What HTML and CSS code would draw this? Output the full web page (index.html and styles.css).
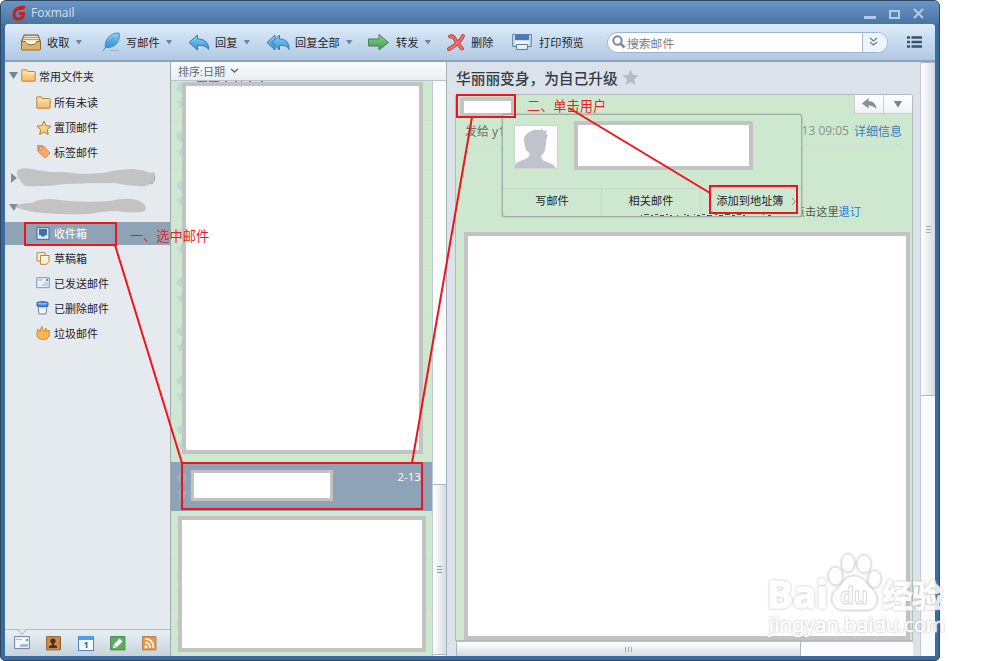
FILE: index.html
```html
<!DOCTYPE html>
<html lang="zh-CN">
<head>
    <meta charset="UTF-8">
    <meta name="viewport" content="width=device-width, initial-scale=1.0">
    <title>Foxmail</title>
    <link rel="stylesheet" href="styles.css">
</head>
<body>

    <svg class="defs" width="0" height="0">
        <defs>
            <linearGradient id="blue" x1="0" y1="0" x2="0" y2="1"><stop offset="0" stop-color="#8fd3fa"/><stop offset="1" stop-color="#2f90d4"/></linearGradient>
            <linearGradient id="green" x1="0" y1="0" x2="0" y2="1"><stop offset="0" stop-color="#86cf8b"/><stop offset="1" stop-color="#3d9e50"/></linearGradient>
            <linearGradient id="gold" x1="0" y1="0" x2="0" y2="1"><stop offset="0" stop-color="#ffe2a6"/><stop offset="1" stop-color="#f5bb68"/></linearGradient>
            <symbol id="star" viewBox="0 0 16 16"><path d="M8 .6l2.2 4.9 5.3.6-4 3.6 1.1 5.3L8 12.300 3.400 15l1.100-5.300-4-3.600 5.300-.6z"/></symbol>
            <symbol id="folder" viewBox="0 0 15 13"><path d="M.8 11.500V1.500q0-.7.7-.7h4l1.200 1.700h6.800q.7 0 .7.700v8.300q0 .7-.7.700h-12q-.7 0-.7-.7z" fill="url(#gold)" stroke="#bb7f35"/><path d="M1.500 4h12" stroke="#fff0c8"/></symbol>
        </defs>
    </svg>

    <div class="window">
        <div class="titlebar">
            <svg class="logo" width="14" height="16" viewBox="0 0 14 16"><path d="M12 2.500C6 1.500 2 5 2 10c0 3 2 4 4.500 4C9.500 14 11.500 12 11.500 8.500H7" fill="none" stroke="#cf1f12" stroke-width="3"/><path d="M3 6l4-4.500L14 1l-2 3.500z" fill="#cf1f12"/></svg>
            <span>Foxmail</span>
            <svg class="controls" width="62" height="14" viewBox="0 0 62 14" fill="none" stroke="#b4cbe4">
                <path d="M0 11.500h12" stroke-width="3"/><path d="M26 5h9v7h-9z" stroke-width="2"/><path d="M50 3l9 9M59 3l-9 9" stroke-width="2"/>
            </svg>
        </div>

        <div class="toolbar">
            <div class="tool receive">
                <svg width="22" height="20" viewBox="0 0 22 20"><path d="M4 3h14l2.500 6.500H1.500z" fill="#c49c66" stroke="#826337"/><path d="M4.500 4.500h13M3.500 6.500h15M3 8.500h16" stroke="#f3e4cf"/><path d="M1.500 9.500h4q1 3.500 5.500 3.500t5.500-3.500h4V17q0 1-1 1h-17q-1 0-1-1z" fill="#dbb660" stroke="#8b6b32"/><path d="M5.500 9h11q-1 3-5.500 3t-5.500-3z" fill="#fff"/></svg>
                <span>收取</span><i class="arrow"></i>
            </div>
            <div class="tool write">
                <svg width="19" height="20" viewBox="0 0 19 20"><path d="M8 18.500h9" stroke="#9fb3c7"/><path d="M3.500 15.500C2 8 8 1 17 1c1.500 8-3 13.500-10 14.500z" fill="url(#blue)" stroke="#3a93d0"/><path d="M1 19Q5 11 12 5.500" fill="none" stroke="#4a93c4"/></svg>
                <span>写邮件</span><i class="arrow"></i>
            </div>
            <div class="tool reply">
                <svg width="22" height="19" viewBox="0 0 22 19"><path d="M1 9.500L9.500 2v4C17 6 21 10 20.500 16.500 18 12.500 14 12.500 9.500 12.500V17z" fill="url(#blue)" stroke="#327eb6"/></svg>
                <span>回复</span><i class="arrow"></i>
            </div>
            <div class="tool reply-all">
                <svg width="24" height="19" viewBox="0 0 24 19"><path d="M1 9.500L9 2v4l-3 3.500 3 4V17z" fill="url(#blue)" stroke="#327eb6"/><path d="M6 9.500L13.500 2v4C20 6 23.500 10 23 16.500 21 12.500 18 12.500 13.500 12.500V17z" fill="url(#blue)" stroke="#327eb6"/></svg>
                <span>回复全部</span><i class="arrow"></i>
            </div>
            <div class="tool forward">
                <svg width="23" height="19" viewBox="0 0 23 19"><path d="M1.500 6H12V1.500l9.500 8L12 17v-4H1.500z" fill="url(#green)" stroke="#468151"/></svg>
                <span>转发</span><i class="arrow"></i>
            </div>
            <div class="tool delete">
                <svg width="19" height="19" viewBox="0 0 19 19" fill="none"><path d="M3 3.500q3-1 5 3 3 5 7 9M16 3Q13 10 2 16" stroke="#b53a38" stroke-width="3.800" stroke-linecap="round"/><path d="M3 3.500q3-1 5 3 3 5 7 9M16 3Q13 10 2 16" stroke="#ee7269" stroke-width="2.200" stroke-linecap="round"/></svg>
                <span>删除</span>
            </div>
            <div class="tool print">
                <svg width="20" height="18" viewBox="0 0 20 18"><path d="M.7 1.500h18.600v12H.7z" fill="#cddcea" stroke="#627fa2"/><path d="M3 2h14v5H3z" fill="#4678cb"/><path d="M3 8.500h14v2H3z" fill="#fff"/><path d="M4.500 11.500h11v5h-11z" fill="#e7f3fa" stroke="#627fa2"/></svg>
                <span>打印预览</span>
            </div>
            <div class="search">
                <svg width="14" height="14" viewBox="0 0 14 14" fill="none" stroke="#7489a0" stroke-width="2"><circle cx="5.500" cy="5.500" r="4.200"/><path d="M8.500 8.500l4 4" stroke-width="2.500"/></svg>
                <span>搜索邮件</span>
                <div class="search-more"><svg width="9" height="10" viewBox="0 0 9 10" fill="none" stroke="#6d7f90" stroke-width="1.300"><path d="M1 1l3.500 3L8 1M1 5l3.500 3L8 5"/></svg></div>
            </div>
            <svg class="menu" width="15" height="12" viewBox="0 0 15 12" stroke="#38546f" stroke-width="2.600"><path d="M0 1.500h3M4.500 1.500H15M0 6h3M4.500 6H15M0 10.500h3M4.500 10.500H15"/></svg>
        </div>

        <div class="main">
            <div class="sidebar">
                <div class="folders">
                    <div class="folder root"><i class="arrow"></i><svg width="15" height="13"><use href="#folder"/></svg>常用文件夹</div>
                    <div class="folder"><svg width="15" height="13"><use href="#folder"/></svg>所有未读</div>
                    <div class="folder"><svg width="15" height="15" viewBox="-.5 -.5 17 17" fill="#f5d27e" stroke="#a97c32"><use href="#star"/></svg>置顶邮件</div>
                    <div class="folder"><svg width="15" height="15" viewBox="0 0 15 15"><path d="M1.500 1.500l6 .5 6.500 7-5 5-7-6.500z" fill="#f8aa6b" stroke="#dc8850"/><circle cx="4.500" cy="4.500" r="1.500" fill="#fff" stroke="#b5673b"/></svg>标签邮件</div>
                    <div class="account">
                        <svg width="165" height="29" viewBox="5 165 165 29"><path d="M11 174l6 5-6 5z" fill="#7c8ea0"/><path d="M151 185q4-1 3.500-9" fill="none" stroke="#4c6ea0"/><path d="M17 172q4-4 15-2 19 4 33 3 15 3 38 1 16-4 30-4 12 1 17 4 5-2 5 1l-1 9q-5 1-8 3-15 1-31-3-24 0-50 1-22 3-40 2-9-8-8-15z" fill="#c3c3c3"/></svg>
                    </div>
                    <div class="account">
                        <svg width="165" height="28" viewBox="5 194 165 28"><path d="M9 205h9l-4 7z" fill="#7c8ea0"/><path d="M15 208q3-4 17-4 10-6 28-3 22 3 50 1 16-4 27-1 11 4 8 11-9 3-28 0-12 0-28 3-26 1-46-1-15-1-28-6z" fill="#c3c3c3"/></svg>
                    </div>
                    <div class="folder selected"><svg width="15" height="13" viewBox="0 0 15 13"><path d="M1 .7h12v11.600H1z" fill="#dfebf7" stroke="#41648c"/><path d="M3 2h8v6H9.500l-1 1.500h-3L4.500 8H3z" fill="#3d72a9"/></svg>收件箱</div>
                    <div class="folder"><svg width="15" height="13" viewBox="0 0 15 13" fill="#fff0d5" stroke="#b98343"><path d="M1 .7h8V9H1z"/><path d="M4.500 3.500h8.500v6l-2.500 2.800h-6z"/></svg>草稿箱</div>
                    <div class="folder"><svg width="15" height="12" viewBox="0 0 15 12"><path d="M.7.7h12.600v10H.7z" fill="#e7eef5" stroke="#7c93ae"/><path d="M2 3h4M6 8h6M8 6h4" stroke="#9bb1ca"/><path d="M10 2h2v2h-2z" fill="#5e91b8"/></svg>已发送邮件</div>
                    <div class="folder"><svg width="15" height="14" viewBox="0 0 15 14"><path d="M2 4h9l-1 9H3z" fill="#f1f3f6" stroke="#74879e"/><path d="M1 1.500q5.500-2 11 0V5q-5.500 2-11 0z" fill="#4b8ae0" stroke="#2b62ac"/><path d="M2 2.500q4.500 1 9 0" stroke="#a8d0ff" fill="none"/></svg>已删除邮件</div>
                    <div class="folder"><svg width="15" height="14" viewBox="0 0 15 14"><path d="M1 7q0-2 1-4l2 3Q4 3 6 .5q0 3 2 5L10 2l1 4 2-2q2 9.500-5.500 9.500T1 7z" fill="#f8b757" stroke="#d28629"/></svg>垃圾邮件</div>
                </div>
                <div class="modules">
                    <svg class="notch" width="12" height="7" viewBox="0 0 12 7"><path d="M0 .5h1.500l4.500 5 4.500-5H12" fill="#e5eaee" stroke="#a5afb8"/></svg>
                    <svg width="16" height="14" viewBox="0 0 16 14"><path d="M.6.600h14.800v12H.6z" fill="#f0f5fa" stroke="#6d83a2"/><path d="M2 3.500h6" stroke="#abc"/><path d="M7 8h7v3H5z" fill="#a4bfd1"/><path d="M12 3h2v2h-2z" fill="#4eaa76"/></svg>
                    <svg width="16" height="15" viewBox="0 0 16 15"><path d="M.6.600h13.800v13.300H.6z" fill="#c98b50" stroke="#9c6330"/><path d="M14.500 2v11" stroke="#8a562c"/><circle cx="7" cy="5" r="2.600" fill="#4b3020"/><path d="M6 7h2v2l3 1v2H3v-2l3-1z" fill="#4b3020"/></svg>
                    <div class="calendar">1</div>
                    <svg width="16" height="15" viewBox="0 0 16 15"><path d="M.6.600h14.300v13.300H.6z" fill="#5fac61" stroke="#438a4a"/><path d="M5 10l6-6" stroke="#fff" stroke-width="4"/><path d="M3 12v-3l3 3z" fill="#fff"/></svg>
                    <svg width="15" height="15" viewBox="0 0 15 15" fill="none"><path d="M.6.600h13.300v13.300H.6z" fill="#e49b50" stroke="#bd783a"/><circle cx="4" cy="11" r="1.400" fill="#fff"/><path d="M3 6.500q5 0 5 5.500M3 3q8.500 0 8.500 9" stroke="#fff" stroke-width="1.600"/></svg>
                </div>
            </div>

            <div class="mail-list">
                <div class="sort">排序:日期<svg width="9" height="6" viewBox="0 0 9 6" fill="none" stroke="#626a72" stroke-width="1.500"><path d="M1 1l3.500 3L8 1"/></svg></div>
                <div class="list-body">
                    <div class="rows">
                        <div class="row"><i></i><svg><use href="#star"/></svg></div>
                        <div class="row"><i></i><svg><use href="#star"/></svg></div>
                        <div class="row"><i></i><svg><use href="#star"/></svg></div>
                        <div class="row"><i></i><svg><use href="#star"/></svg></div>
                        <div class="row"><i></i><svg><use href="#star"/></svg></div>
                        <div class="row"><i></i><svg><use href="#star"/></svg></div>
                        <div class="row"><i></i><svg><use href="#star"/></svg></div>
                        <div class="row"><i></i><svg><use href="#star"/></svg></div>
                        <div class="row current"><i></i><svg><use href="#star"/></svg><div class="blank"></div><span>2-13</span></div>
                        <div class="row"><i></i><svg><use href="#star"/></svg></div>
                        <div class="row"><i></i><svg><use href="#star"/></svg></div>
                        <div class="row"><i></i><svg><use href="#star"/></svg></div>
                        <svg class="cut-line" width="70" height="2" viewBox="0 0 70 2" stroke="#59635b" stroke-width="1.500"><path d="M0 1h10M12 1h10M28 1h2M38 1h2M44 1h1M52 1h2M64 1h2"/></svg>
                        <div class="blank cover-top"></div>
                        <div class="blank cover-bottom"></div>
                    </div>
                    <div class="scrollbar"><div class="thumb"><i class="grip"></i></div></div>
                </div>
            </div>

            <div class="reader">
                <h1>华丽丽变身，为自己升级<svg width="17" height="17"><use href="#star"/></svg></h1>
                <div class="mail">
                    <div class="mail-head">
                        <div class="blank sender"></div>
                        <div class="actions">
                            <div><svg width="15" height="12" viewBox="0 0 15 12"><path d="M0 5.500L6.500 0v3q7 0 8 8-3-3.500-8-3.500v3z" fill="#8291a0"/></svg></div>
                            <div><i class="arrow"></i></div>
                        </div>
                    </div>
                    <div class="mail-to"><span>发给 y1</span><span class="time">2-13 09:05</span><a>详细信息</a></div>
                    <div class="unsubscribe">您可点击这里<a>退订</a></div>
                    <div class="blank content"></div>

                    <div class="card">
                        <div class="card-info">
                            <svg class="avatar" width="44" height="44" viewBox="0 0 44 44"><path d="M.5.500h43v43H.5z" fill="#fff" stroke="#cbd5cf"/><path d="M1 43v-3q1-3 8-5 6-2 7-6l-4-4-2-8q-1-6 4-9 5-4 11-3l4-1v2l4-1-1 4 2 1q-2 3-2 8 0 9-5 13 0 4 6 6 7 2 9 6z" fill="#bec3cc"/></svg>
                            <div class="blank"></div>
                        </div>
                        <div class="card-menu"><span>写邮件</span><span>相关邮件</span><span>添加到地址簿</span></div>
                        <svg class="more" width="6" height="9" viewBox="0 0 6 9" fill="none" stroke="#7a8a7e"><path d="M1 1l3.500 3.500L1 8"/></svg>
                        <svg class="cut-line" width="130" height="3" viewBox="0 0 130 3" stroke="#49534c"><path d="M0 1.500h1M3 .5h5M10 1.500h2M14 .5h3M19 1.500h4M25 .5h2M29 1.500h2M36 1.500h1M43 .5h2M46 1.500h2M53 .5h1M56 1.500h3M61 .5h3M66 1.500h5M74 .5h2M78 1.500h4M84 .5h5M91 1.500h3M96 .5h4M102 1.500h2M122 .5h1M127 1.500h3"/></svg>
                    </div>
                </div>
                <div class="hscroll"><div class="hthumb"><i class="grip"></i></div></div>
            </div>

            <div class="scrollbar page-scroll"><div class="thumb"><i class="grip"></i></div></div>
        </div>
    </div>

    <!-- step marks drawn over the window -->
    <svg class="marks" width="1000" height="661" viewBox="0 0 1000 661" fill="none" stroke="#f0121c" stroke-width="2">
        <path d="M25 223h91v22H25zM182 463h240v46H182zM457 95h58v22h-58zM710 186h87v27h-87z"/>
        <path d="M115 245L182 463M472 117L412 463M569 108L710 193"/>
    </svg>
    <div class="step step-one">一、选中邮件</div>
    <div class="step step-two">二、单击用户</div>

    <svg class="watermark" width="190" height="95" viewBox="760 548 190 95">
        <g class="wm-shape">
            <ellipse cx="835.500" cy="576" rx="7" ry="9"/><ellipse cx="848" cy="563" rx="6.500" ry="9"/><ellipse cx="864" cy="564" rx="7" ry="9"/><ellipse cx="874.500" cy="579" rx="6.500" ry="8.500"/>
            <path d="M854 576c-10 0-10 7-16 12-11 8-5 22 5 22h23c12 0 15-13 5-22-6-5-7-12-17-12z"/>
        </g>
        <text x="767" y="608" class="wm-big" textLength="61" lengthAdjust="spacingAndGlyphs">Bai</text>
        <text x="840" y="604" class="wm-du" textLength="28" lengthAdjust="spacingAndGlyphs">du</text>
        <text x="882" y="607" class="wm-cn" textLength="61">经验</text>
        <text x="769" y="632" class="wm-url" textLength="176" lengthAdjust="spacingAndGlyphs">jingyan.baidu.com</text>
    </svg>

</body>
</html>
```
FILE: styles.css
```css
* {
    box-sizing: border-box;
}

body {
    margin: 0;
    width: 1000px;
    height: 661px;
    overflow: hidden;
    position: relative;
    background: #fff;
    font-family: "Open Sans", "Noto Sans CJK SC", sans-serif;
    font-size: 11.2px;
    color: #1d242b;
}

svg {
    display: block;
    flex: none;
}

.defs {
    position: absolute;
}

.window {
    width: 940px;
    height: 661px;
    display: flex;
    flex-direction: column;
    padding: 0 4px 4px;
    background: #3b6a9e;
    border: 1px solid #2d4866;
    border-radius: 6px 6px 5px 5px;
}

.titlebar {
    height: 23px;
    margin: 0 -4px;
    padding: 0 13px 0 11px;
    display: flex;
    align-items: center;
    background: linear-gradient(#6c95c5, #4874a4);
    border-radius: 5px 5px 0 0;
    color: #d3e2f3;
    font-size: 12px;
}

.titlebar span {
    margin-left: 5px;
}

.controls {
    margin-left: auto;
}

.toolbar {
    height: 38px;
    flex: none;
    display: flex;
    align-items: center;
    padding-left: 15px;
    background: linear-gradient(#dcebf9, #b0c9e4);
    border-bottom: 2px solid #8fa2b7;
    border-radius: 3px 3px 0 0;
}

.tool {
    display: flex;
    align-items: center;
    flex: none;
    white-space: nowrap;
}

.tool span {
    margin-left: 5px;
}

.receive { width: 82px; }
.write { width: 86px; }
.reply { width: 78px; }
.reply-all { width: 101px; }
.forward { width: 80px; }
.delete { width: 65px; }
.print { width: 95px; }

.forward span {
    margin-left: 6px;
}

.print span {
    margin-left: 7px;
}

.arrow {
    width: 7px;
    height: 5px;
    flex: none;
    background: #70839a;
    clip-path: polygon(0 0, 100% 0, 50% 100%);
}

.tool .arrow {
    margin-left: 6px;
}

.search {
    width: 281px;
    height: 21px;
    flex: none;
    display: flex;
    align-items: center;
    padding-left: 4px;
    background: #fff;
    border: 1px solid #9db4cb;
    border-radius: 11px;
    overflow: hidden;
    color: #7d7d7d;
    font-size: 11.8px;
}

.search span {
    margin-left: 1px;
}

.search-more {
    margin-left: auto;
    width: 25px;
    height: 100%;
    display: flex;
    align-items: center;
    padding-left: 6px;
    border-left: 1px solid #a9bccf;
    background: #edf4fb;
}

.menu {
    margin-left: 19px;
}

.main {
    flex: 1;
    min-height: 0;
    display: flex;
    background: #dbe2ea;
}

.sidebar {
    width: 166px;
    display: flex;
    flex-direction: column;
    background: #e5eaef;
    border-right: 1px solid #9fa9b3;
}

.folders {
    flex: 1;
}

.folder {
    height: 24.8px;
    display: flex;
    align-items: center;
    padding-left: 31px;
    font-size: 11px;
}

.folder svg {
    margin-right: 3px;
}

.root {
    height: 28px;
    padding: 0 0 1px 4px;
}

.root .arrow {
    width: 9px;
    height: 7px;
    margin-right: 3px;
}

.account {
    height: 28.8px;
}

.selected {
    height: 23px;
    background: #8fa3b7;
    color: #fff;
    margin-bottom: 1px;
}

.modules {
    height: 27px;
    position: relative;
    display: flex;
    align-items: center;
    gap: 16px;
    padding-left: 9px;
    background: linear-gradient(#e6f0f6, #c8d2da);
    border-top: 1px solid #b2bcc5;
}

.notch {
    position: absolute;
    left: 11px;
    top: -1px;
}

.calendar {
    width: 16px;
    height: 15px;
    border: 1px solid #4b83c0;
    border-top: 4px solid #559be5;
    background: #f4f9fd;
    color: #22679b;
    font-weight: bold;
    font-size: 9px;
    line-height: 10px;
    text-align: center;
}

.mail-list {
    width: 276px;
    display: flex;
    flex-direction: column;
    border-right: 1px solid #a6adb7;
}

.sort {
    height: 19px;
    flex: none;
    display: flex;
    align-items: center;
    padding: 0 0 1px 7px;
    background: linear-gradient(#fafcfe, #e9eef3);
    border-bottom: 1px solid #b6c4cb;
    color: #626a72;
    font-size: 11px;
}

.sort svg {
    margin-left: 5px;
}

.list-body {
    flex: 1;
    min-height: 0;
    display: flex;
}

.rows {
    width: 261px;
    position: relative;
    overflow: hidden;
    background: #cde8cf;
}

.row {
    height: 48.8px;
    display: grid;
    grid-template-columns: 12px 1fr auto;
    grid-template-rows: 16px 16px;
    row-gap: 2px;
    padding: 7px 11px 0 5px;
    border-bottom: 1px solid #d8dcd2;
}

.row:first-child {
    margin-top: -9px;
}

.row > i {
    width: 9px;
    height: 9px;
    margin: 4px 0 0 1px;
    border-radius: 50%;
    background: #bbd8d5;
}

.row > svg {
    grid-row: 2;
    width: 12px;
    height: 12px;
    fill: #bbd8d5;
}

.current {
    background: #8fa3b7;
    border-bottom: none;
}

.current > i {
    background: #9aafc1;
}

.current > svg {
    fill: #9aafc1;
}

.current span {
    grid-column: 3;
    grid-row: 1;
    color: #fff;
    font-size: 11.6px;
}

.blank {
    background: #fff;
    border: 4px solid #c3c3c3;
}

.current .blank {
    grid-column: 2;
    grid-row: 1 / 3;
    width: 142px;
    height: 31px;
    margin: 1px 0 0 3px;
    border-width: 3px;
}

.cover-top {
    position: absolute;
    left: 11px;
    top: 1px;
    width: 241px;
    height: 372px;
}

.cover-bottom {
    position: absolute;
    left: 7px;
    top: 435px;
    width: 248px;
    height: 136px;
}

.rows .cut-line {
    position: absolute;
    left: 26px;
    top: 0;
}

.scrollbar {
    width: 14px;
    background: #fafcfb;
    border-left: 1px solid #c0cad0;
    display: flex;
    flex-direction: column;
}

.thumb {
    height: 171px;
    margin-top: 403px;
    display: flex;
    align-items: center;
    justify-content: center;
    background: linear-gradient(to right, #fff, #d6dbe2);
    border: solid #adb7c2;
    border-width: 1px 0;
}

.grip {
    width: 5px;
    height: 7px;
    background: repeating-linear-gradient(#91a4b8 0 1px, transparent 1px 3px);
}

.page-scroll {
    width: 15px;
    margin-left: auto;
}

.page-scroll .thumb {
    height: 334px;
    margin-top: 0;
}

.page-scroll .grip {
    background: repeating-linear-gradient(#a3acb6 0 1px, transparent 1px 3px);
}

.reader {
    width: 458px;
    margin-left: 8px;
    display: flex;
    flex-direction: column;
}

h1 {
    height: 32px;
    flex: none;
    margin: 0;
    padding: 0 0 2px 1px;
    display: flex;
    align-items: center;
    font-size: 14.7px;
    font-weight: 500;
    color: #343b43;
    white-space: nowrap;
}

h1 svg {
    margin-left: 4px;
    fill: #b5bbc4;
}

.mail {
    flex: 1;
    min-height: 0;
    position: relative;
    display: flex;
    flex-direction: column;
    background: #cde8cf;
    border: 1px solid #afbbbc;
    border-radius: 3px 3px 0 0;
    font-size: 12px;
}

.mail-head {
    height: 21px;
    display: flex;
    justify-content: space-between;
}

.sender {
    width: 55px;
    height: 20px;
    margin: 2px 0 0 4px;
}

.actions {
    display: flex;
    width: 58px;
    height: 19px;
    border: solid #c7cfd0;
    border-width: 0 0 1px 1px;
    background: linear-gradient(#fff, #f0f2f4);
}

.actions div {
    flex: 1;
    display: flex;
    align-items: center;
    justify-content: center;
}

.actions div + div {
    border-left: 1px solid #c7cfd0;
}

.actions .arrow {
    width: 9px;
    height: 7px;
}

.mail-to {
    height: 29px;
    margin: 0 10px 0 9px;
    padding-top: 1px;
    display: flex;
    align-items: center;
    border-bottom: 1px solid #d0dccf;
    color: #646f68;
}

.time {
    margin-left: auto;
    color: #8a9389;
}

a {
    color: #3b7cb5;
}

.mail-to a {
    margin-left: 5px;
}

.unsubscribe {
    margin-top: 57px;
    padding-right: 51px;
    height: 20px;
    line-height: 20px;
    text-align: right;
    font-size: 11.2px;
    color: #4e5851;
}

.unsubscribe a {
    color: #1f7ad8;
}

.content {
    flex: 1;
    margin: 10px 2px 0 8px;
}

/* contact card that pops up under the sender */
.card {
    position: absolute;
    left: 46px;
    top: 19px;
    width: 300px;
    height: 103px;
    display: flex;
    flex-direction: column;
    background: #cde8cf;
    border: 1px solid #a0afa5;
    border-radius: 3px;
    box-shadow: 0 0 2px #8d9b91;
}

.card-info {
    height: 73px;
    flex: none;
    display: flex;
    padding: 6px 0 0 11px;
}

.avatar {
    margin-top: 4px;
}

.card-info .blank {
    width: 179px;
    height: 49px;
    margin-left: 16px;
}

.card-menu {
    flex: 1;
    display: flex;
    padding-right: 2px;
    border-top: 1px solid #c8d7ca;
    font-size: 11.2px;
    line-height: 23px;
    text-align: center;
}

.card-menu span {
    flex: 1;
}

.card-menu span + span {
    border-left: 1px solid #c8d7ca;
}

.more {
    position: absolute;
    right: 4px;
    top: 82px;
}

.card .cut-line {
    position: absolute;
    left: 138px;
    top: 99px;
}

.hscroll {
    height: 15px;
    flex: none;
    margin-left: 1px;
    background: #fafcfb;
    border-top: 1px solid #b4bec6;
}

.hthumb {
    width: 345px;
    height: 14px;
    display: flex;
    align-items: center;
    justify-content: center;
    background: linear-gradient(#fff, #d6dbe2);
    border: solid #adb7c2;
    border-width: 0 1px;
}

.hthumb .grip {
    width: 7px;
    height: 5px;
    background: repeating-linear-gradient(to right, #a3acb6 0 1px, transparent 1px 3px);
}

.marks {
    position: absolute;
    left: 0;
    top: 0;
}

.step {
    position: absolute;
    font-size: 13.2px;
    line-height: 18px;
    color: #ed1c24;
}

.step-one {
    left: 130px;
    top: 227px;
}

.step-two {
    left: 527px;
    top: 97px;
}

.watermark {
    position: absolute;
    left: 760px;
    top: 548px;
    font-family: "Noto Sans", "Noto Sans CJK SC", sans-serif;
    fill: #fff;
    stroke: #fff;
    stroke-linejoin: round;
    filter: drop-shadow(0 0 1px #aaa);
    opacity: 0.85;
}

.wm-shape {
    stroke: #dcdcdc;
}

.wm-big {
    font-size: 38px;
    font-weight: bold;
    stroke-width: 1.5;
}

.wm-du {
    font-size: 24px;
    font-weight: bold;
    fill: #fff;
    stroke: #cfcfcf;
}

.wm-cn {
    font-size: 31px;
    font-weight: bold;
}

.wm-url {
    font-size: 20px;
    stroke-width: 0.5;
}
```
